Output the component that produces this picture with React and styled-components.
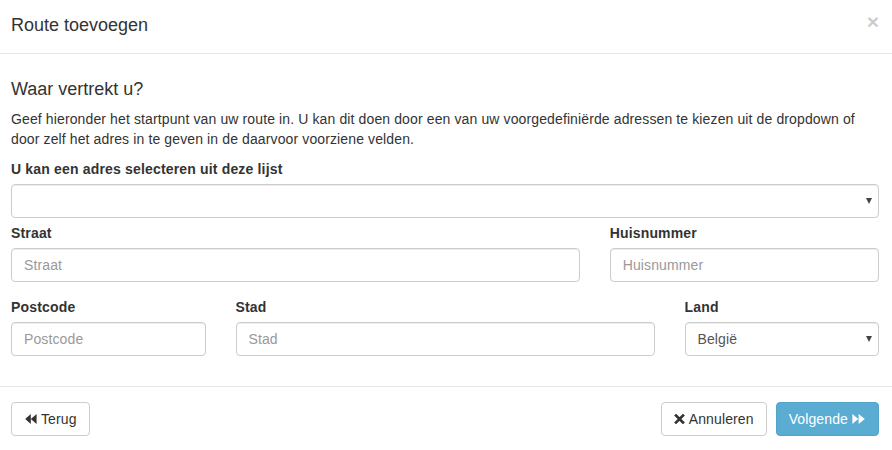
import React from "react";
import styled, { createGlobalStyle } from "styled-components";

const GlobalStyle = createGlobalStyle`
  html, body {
    margin: 0;
    padding: 0;
    background: #fff;
  }
  body {
    font-family: "Liberation Sans", Arial, Helvetica, sans-serif;
    font-size: 14px;
    line-height: 20px;
    letter-spacing: 0.12px;
    color: #333;
  }
  * {
    box-sizing: border-box;
  }
`;

function BackwardIcon() {
  return (
    <Icon width="13" height="10" viewBox="0 0 13 10">
      <path d="M6.8 0v10L1.2 5z M12.6 0v10L6.8 5z" fill="#333" />
    </Icon>
  );
}

function ForwardIcon() {
  return (
    <Icon width="14" height="10" viewBox="0 0 14 10">
      <path d="M0.4 0v10l5.9-5z M6.6 0v10l6.2-5z" fill="#fff" />
    </Icon>
  );
}

function TimesIcon() {
  return (
    <Icon width="11" height="10" viewBox="0 0 11 10">
      <path d="M2 1.5l7 7M9 1.5l-7 7" stroke="#333" strokeWidth="2.6" strokeLinecap="square" />
    </Icon>
  );
}

export default function App() {
  return (
    <>
      <GlobalStyle />
      <Modal>
        <Header>
          <Title>Route toevoegen</Title>
          <Close type="button">×</Close>
        </Header>
        <Body>
          <Heading>Waar vertrekt u?</Heading>
          <Intro>
            Geef hieronder het startpunt van uw route in. U kan dit doen door een van uw
            voorgedefiniërde adressen te kiezen uit de dropdown of door zelf het adres in te
            geven in de daarvoor voorziene velden.
          </Intro>
          <Group $spacing={5}>
            <Label>U kan een adres selecteren uit deze lijst</Label>
            <SelectWrap>
              <Select defaultValue="">
                <option value=""></option>
              </Select>
            </SelectWrap>
          </Group>
          <Row>
            <Col $span={8}>
              <Label>Straat</Label>
              <Input placeholder="Straat" />
            </Col>
            <Col $span={4}>
              <Label>Huisnummer</Label>
              <Input placeholder="Huisnummer" />
            </Col>
          </Row>
          <Row>
            <Col $span={3}>
              <Label>Postcode</Label>
              <Input placeholder="Postcode" />
            </Col>
            <Col $span={6}>
              <Label>Stad</Label>
              <Input placeholder="Stad" />
            </Col>
            <Col $span={3}>
              <Label>Land</Label>
              <SelectWrap>
                <Select defaultValue="be">
                  <option value="be">België</option>
                </Select>
              </SelectWrap>
            </Col>
          </Row>
        </Body>
        <Footer>
          <Button>
            <BackwardIcon /> Terug
          </Button>
          <Actions>
            <Button>
              <TimesIcon /> Annuleren
            </Button>
            <Button $primary>
              Volgende <ForwardIcon />
            </Button>
          </Actions>
        </Footer>
      </Modal>
    </>
  );
}

const Modal = styled.div`
  width: 892px;
  background: #fff;
`;

const Header = styled.div`
  display: flex;
  align-items: flex-start;
  justify-content: space-between;
  padding: 12px 13px 15px 11px;
  border-bottom: 1px solid #e5e5e5;
`;

const Title = styled.h4`
  margin: 0;
  font-size: 18px;
  font-weight: 400;
  line-height: 26px;
  letter-spacing: 0;
  color: #333;
`;

const Close = styled.button`
  border: 0;
  background: transparent;
  padding: 0;
  margin-top: -1px;
  font-family: "Liberation Sans", Arial, sans-serif;
  font-size: 21px;
  font-weight: 700;
  line-height: 1;
  color: #000;
  opacity: 0.2;
  cursor: pointer;
`;

const Body = styled.div`
  padding: 15px 13px 15px 11px;
`;

const Heading = styled.h4`
  margin: 10px 0;
  font-size: 18px;
  font-weight: 400;
  line-height: 20px;
  letter-spacing: 0;
  color: #333;
`;

const Intro = styled.p`
  margin: 0 0 10px;
`;

const Group = styled.div`
  margin-bottom: ${(p) => p.$spacing}px;
`;

const Row = styled.div`
  display: grid;
  grid-template-columns: repeat(12, 1fr);
  column-gap: 30px;
  margin-bottom: 15px;
`;

const Col = styled.div`
  grid-column: span ${(p) => p.$span};
  min-width: 0;
`;

const Label = styled.label`
  display: block;
  margin-bottom: 5px;
  font-weight: 700;
  line-height: 20px;
  letter-spacing: 0.17px;
`;

const fieldStyles = `
  display: block;
  width: 100%;
  height: 34px;
  padding: 6px 12px;
  font-family: "Liberation Sans", Arial, sans-serif;
  font-size: 14px;
  line-height: 20px;
  letter-spacing: 0.12px;
  color: #555;
  background: #fff;
  border: 1px solid #ccc;
  border-radius: 4px;
  box-shadow: inset 0 1px 1px rgba(0, 0, 0, 0.075);
  outline: none;
`;

const Input = styled.input`
  ${fieldStyles}
  &::placeholder {
    color: #999;
  }
`;

const SelectWrap = styled.div`
  position: relative;
  &::after {
    content: "";
    position: absolute;
    right: 7px;
    top: 14px;
    border-left: 3.5px solid transparent;
    border-right: 3.5px solid transparent;
    border-top: 6px solid #444;
    pointer-events: none;
  }
`;

const Select = styled.select`
  ${fieldStyles}
  appearance: none;
  -webkit-appearance: none;
  padding-right: 24px;
`;

const Footer = styled.div`
  display: flex;
  justify-content: space-between;
  padding: 15px 13px 15px 11px;
  border-top: 1px solid #e5e5e5;
`;

const Actions = styled.div`
  display: flex;
  gap: 9px;
`;

const Button = styled.button`
  display: inline-flex;
  align-items: center;
  gap: 4px;
  height: 34px;
  padding: 6px 12px;
  font-family: "Liberation Sans", Arial, sans-serif;
  font-size: 14px;
  line-height: 20px;
  letter-spacing: 0.12px;
  color: ${(p) => (p.$primary ? "#fff" : "#333")};
  background: ${(p) => (p.$primary ? "#5bacd2" : "#fff")};
  border: 1px solid ${(p) => (p.$primary ? "#52a3ca" : "#ccc")};
  border-radius: 4px;
  cursor: pointer;
`;

const Icon = styled.svg`
  display: block;
  flex: none;
`;
